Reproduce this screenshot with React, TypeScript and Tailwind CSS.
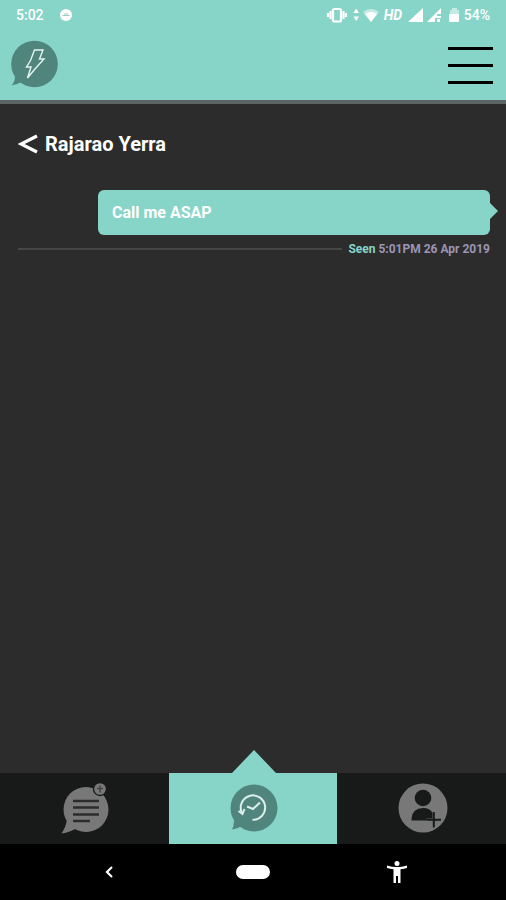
import React from "react";

const StatusIcons: React.FC = () => (
    <svg viewBox="0 0 134 20" className="h-5 w-[134px]" fill="#fff" aria-hidden="true">
        {/* vibrate */}
        <rect x="7" y="4" width="8" height="12.500" rx="1.500" fill="none" stroke="#fff" strokeWidth="2.200" />
        <path d="M4.500 6v8M2 8v4M17.500 6v8M20 8v4" stroke="#fff" strokeWidth="2.200" />
        {/* data arrows */}
        <path d="M27.500 8l2.700-4.500L33 8zM27.500 11.500l2.700 4.500 2.800-4.500z" />
        {/* wifi */}
        <path d="M37 7q8-6 16 0l-8 10z" opacity="0.5" />
        <path d="M39 9q6-4 12 0l-6 8z" />
        {/* signal */}
        <path d="M82 17L97 3v14z" />
        <path d="M101 17L115 3v6h-4v4h-2v4zM111 11h4v2h-4zM111 14h3v3h-3z" />
        {/* battery */}
        <path d="M126 3h5v2h2v5h-9V5h2z" opacity="0.5" />
        <path d="M123 9h10v7q0 1-1 1h-8q-1 0-1-1z" />
    </svg>
);

const BoltLogo: React.FC = () => (
    <svg viewBox="0 0 48 48" className="h-12 w-12" aria-hidden="true">
        <circle cx="24.500" cy="24" r="23.300" fill="#50857d" />
        <path d="M5 36q0 6-3.500 9.500 7-1.500 13-5z" fill="#50857d" />
        <path d="M24.500 10H33l-3.500 9H34L24.500 29.500 17.500 38l3.500-11h-4.500l4-6.500z" fill="none" stroke="#e4f5f1" strokeWidth="1.400" />
    </svg>
);

const MessagesIcon: React.FC = () => (
    <svg viewBox="0 0 50 54" className="h-[54px] w-[50px]" aria-hidden="true">
        <circle cx="26" cy="28.500" r="22.500" fill="#787878" />
        <path d="M7 38q-1 8-5.500 14.500 9-1 18-7z" fill="#787878" />
        <path d="M13 20h26M13 26.500h26M13 33.500h26M13 40h17" stroke="#2c2c2c" strokeWidth="2.600" />
        <circle cx="40" cy="8" r="6.500" fill="#787878" stroke="#171a19" strokeWidth="1.300" />
        <path d="M40 4.500v7M37 7.500h6" stroke="#444" strokeWidth="1.500" />
    </svg>
);

const HistoryIcon: React.FC = () => (
    <svg viewBox="0 0 48 48" className="h-12 w-12" aria-hidden="true">
        <circle cx="24" cy="24" r="23.500" fill="#50857d" />
        <path d="M4 37q0 5-2 8.500 7-1 12-5z" fill="#50857d" />
        <path d="M12 29A12.200 12.200 0 1 1 22.500 35.800" fill="none" stroke="#dcefeb" strokeWidth="2" />
        <path d="M8.500 27l4 3 2-5" fill="none" stroke="#dcefeb" strokeWidth="2" />
        <path d="M17 22.500l6 2.500 7-6.500" fill="none" stroke="#dcefeb" strokeWidth="2" />
    </svg>
);

const AddContactIcon: React.FC = () => (
    <svg viewBox="0 0 50 50" className="h-[50px] w-[50px]" aria-hidden="true">
        <circle cx="25" cy="25" r="24.500" fill="#787878" />
        <circle cx="25" cy="15" r="8.300" fill="#171a19" />
        <path d="M13.500 37.500v-2q1-10.500 11.500-10.500 7 0 9.500 5v5.500h-6v2z" fill="#171a19" />
        <path d="M35.800 29v15.500M28.500 36.800h14.500" stroke="#171a19" strokeWidth="2" />
    </svg>
);

export default function App() {
    return (
        <div className="flex min-h-screen flex-col bg-[#2c2c2c] font-[Roboto,sans-serif] text-white">
            <header className="border-b-4 border-[#5b6462] bg-[#87d5c8]">
                <div className="flex h-[30px] items-center justify-between pl-4 pr-4 text-sm font-medium">
                    <div className="flex items-center gap-4">
                        <span>5:02</span>
                        <svg viewBox="0 0 12 12" className="h-3 w-3" aria-hidden="true">
                            <circle cx="6" cy="6" r="6" fill="#fff" />
                            <path d="M2.500 6.500h7M4 5h4" stroke="#9cc9c1" strokeWidth="1.200" />
                        </svg>
                    </div>
                    <div className="flex items-center gap-1">
                        <div className="grid items-center">
                            <div className="col-start-1 row-start-1">
                                <StatusIcons />
                            </div>
                            <span className="col-start-1 row-start-1 pl-[58px] font-bold italic">HD</span>
                        </div>
                        <span>54%</span>
                    </div>
                </div>
                <div className="flex h-[70px] items-start justify-between pl-[10px] pr-[13px] pt-[10px]">
                    <a href="#home" aria-label="Home">
                        <BoltLogo />
                    </a>
                    <button type="button" aria-label="Menu" className="flex flex-col gap-[14px] pt-[7px]">
                        <span className="h-[3px] w-[45px] bg-black"></span>
                        <span className="h-[3px] w-[45px] bg-black"></span>
                        <span className="h-[3px] w-[45px] bg-black"></span>
                    </button>
                </div>
            </header>

            <main className="flex-1 pl-[18px] pr-4 pt-[26px]">
                <div className="flex h-7 items-center gap-[7px]">
                    <button type="button" aria-label="Back">
                        <svg viewBox="0 0 20 20" className="h-5 w-5" aria-hidden="true">
                            <path d="M19 2L3 10l16 8" fill="none" stroke="#fff" strokeWidth="3.200" />
                        </svg>
                    </button>
                    <h1 className="text-xl font-bold">Rajarao Yerra</h1>
                </div>
                <div className="relative ml-20 mt-8 flex h-[45px] items-center rounded-md bg-[#87d5c8] px-[14px]">
                    <p className="text-base font-bold">Call me ASAP</p>
                    <svg viewBox="0 0 9 18" className="absolute -right-2 top-3 h-[18px] w-[9px]" aria-hidden="true">
                        <path d="M0 0l9 9-9 9z" fill="#87d5c8" />
                    </svg>
                </div>
                <div className="mt-1 flex h-5 items-center gap-[6px]">
                    <div className="h-[2px] flex-1 bg-[#464646]"></div>
                    <p className="text-xs font-bold text-[#9c94b2]">
                        <span className="text-[#87d5c8]">Seen</span> 5:01PM 26 Apr 2019
                    </p>
                </div>
            </main>

            <nav className="grid h-[71px] grid-cols-3 bg-[#171a19]">
                <a href="#messages" aria-label="Messages" className="flex items-center justify-center pb-0.5 pl-0.5">
                    <MessagesIcon />
                </a>
                <a href="#history" aria-label="History" className="relative flex items-center justify-center bg-[#87d5c8] pb-0.5 pl-0.5">
                    <svg viewBox="0 0 44 23" className="absolute bottom-full h-[23px] w-11" aria-hidden="true">
                        <path d="M22 0l22 23H0z" fill="#87d5c8" />
                    </svg>
                    <HistoryIcon />
                </a>
                <a href="#add" aria-label="Add contact" className="flex items-center justify-center pb-0.5 pl-0.5">
                    <AddContactIcon />
                </a>
            </nav>

            <footer className="grid h-14 grid-cols-3 bg-black px-[37px]">
                <button type="button" aria-label="System back" className="flex items-center justify-center">
                    <svg viewBox="0 0 8 12" className="h-3 w-2" aria-hidden="true">
                        <path d="M7 1L2 6l5 5" fill="none" stroke="#fff" strokeWidth="2.200" />
                    </svg>
                </button>
                <button type="button" aria-label="System home" className="flex items-center justify-center">
                    <span className="h-[14px] w-[34px] rounded-full bg-white"></span>
                </button>
                <button type="button" aria-label="Accessibility" className="flex items-center justify-center">
                    <svg viewBox="0 0 20 22" className="h-[22px] w-5" fill="#fff" aria-hidden="true">
                        <circle cx="10" cy="2.500" r="2.500" />
                        <path d="M0 4.500q10 3 20 0v2.500q-3 1-6.500 1.200V22H11v-7H9v7H6.500V8.200Q3 8 0 7z" />
                    </svg>
                </button>
            </footer>
        </div>
    );
}
